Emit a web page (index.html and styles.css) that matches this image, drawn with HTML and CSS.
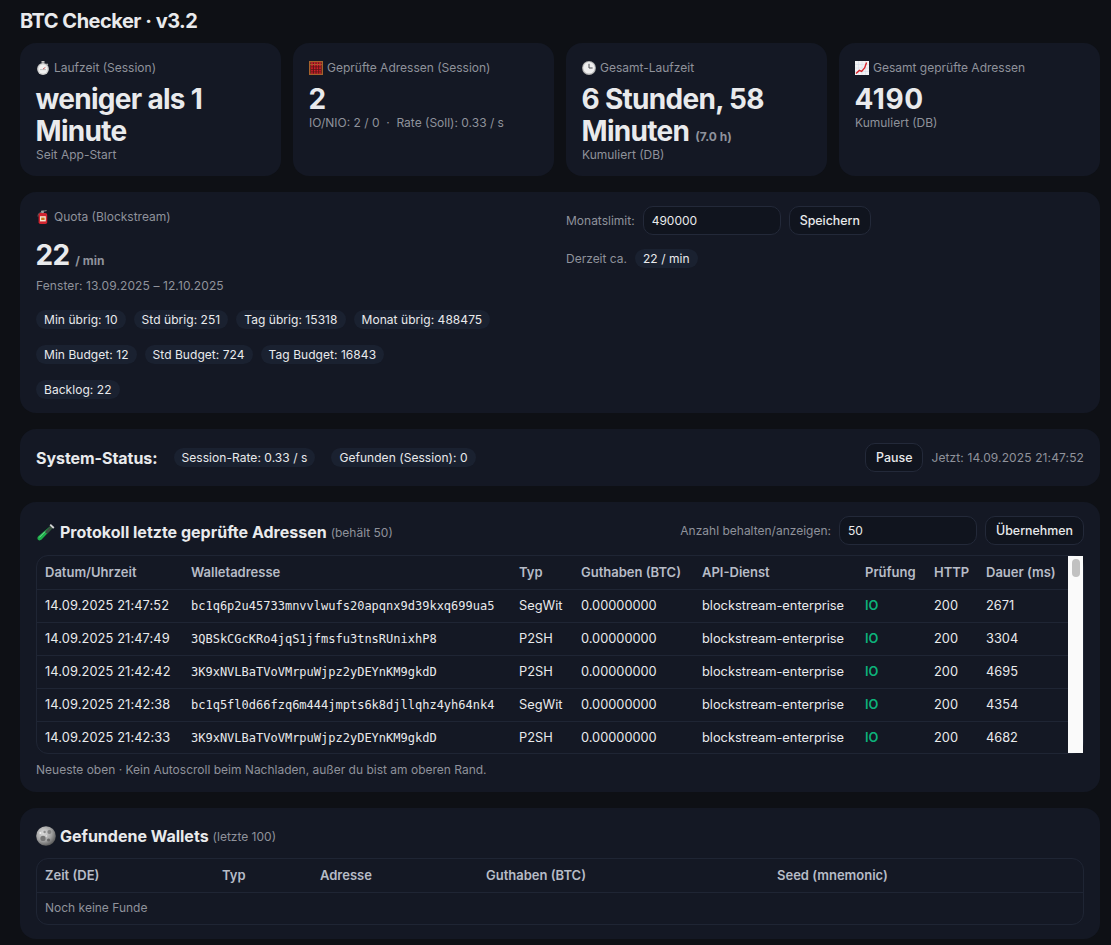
FILE: index.html
```html
<!DOCTYPE html>
<html lang="de">
<head>
  <meta charset="UTF-8" />
  <meta name="viewport" content="width=device-width, initial-scale=1" />
  <title>BTC Checker · v3.2</title>
  <link rel="stylesheet" href="styles.css">
</head>
<body>

  <h1 class="page-title">BTC Checker · v3.2</h1>

  <!-- KPI cards -->
  <div class="kpi-grid">
    <div class="card kpi">
      <div class="label">
        <svg class="emoji" viewBox="0 0 14 14"><rect x="5.5" y="0" width="3" height="1.8" fill="#c4c4c4"/><rect x="6.4" y="1.6" width="1.2" height="1.6" fill="#8f8f8f"/><rect x="10.4" y="2.4" width="1.8" height="1.3" transform="rotate(40 11 3)" fill="#a9a9a9"/><circle cx="7" cy="8" r="5.9" fill="#cfcfcf"/><circle cx="7" cy="8" r="4.5" fill="#f1f1f1"/><path d="M7 8 9.4 6.4" stroke="#c23a3a" stroke-width=".8"/><path d="M4 8.6h6" stroke="#9a9a9a" stroke-width=".6"/></svg>
        Laufzeit (Session)
      </div>
      <div class="value">weniger als 1 Minute</div>
      <div class="sub">Seit App-Start</div>
    </div>
    <div class="card kpi">
      <div class="label">
        <svg class="emoji" viewBox="0 0 14 14"><rect x="0" y="0" width="14" height="14" fill="#a5622c"/><rect x="1.3" y="1.3" width="11.4" height="11.4" fill="#5c1416"/><path d="M1.3 3.6h11.4" stroke="#c08038" stroke-width=".8"/><path d="M3 1.3v11.4M5.7 1.3v11.4M8.4 1.3v11.4M11 1.3v11.4" stroke="#d4202c" stroke-width="1.6" stroke-dasharray="1.8 .7"/></svg>
        Geprüfte Adressen (Session)
      </div>
      <div class="value">2</div>
      <div class="sub">IO/NIO: 2 / 0 &nbsp;·&nbsp; Rate (Soll): 0.33 / s</div>
    </div>
    <div class="card kpi">
      <div class="label">
        <svg class="emoji" viewBox="0 0 14 14"><circle cx="7" cy="7" r="6.9" fill="#b5b5b5"/><circle cx="7" cy="6.8" r="5.8" fill="#efefef"/><path d="M7 2.8V7h3.6" fill="none" stroke="#4a4a50" stroke-width="1"/></svg>
        Gesamt-Laufzeit
      </div>
      <div class="value">6 Stunden, 58 Minuten <span class="value-note">(7.0 h)</span></div>
      <div class="sub">Kumuliert (DB)</div>
    </div>
    <div class="card kpi">
      <div class="label">
        <svg class="emoji" viewBox="0 0 14 14"><rect x="0" y="0" width="14" height="14" fill="#f2f2f4"/><path d="M0 3.5h14M0 7h14M0 10.5h14M3.5 0v14M7 0v14M10.5 0v14" stroke="#c9d3e6" stroke-width=".4"/><path d="M1 12.6 4.4 9.4 6.6 10.4 9.6 7 11.6 1.6" fill="none" stroke="#d8232a" stroke-width="1.4"/></svg>
        Gesamt geprüfte Adressen
      </div>
      <div class="value num">4190</div>
      <div class="sub">Kumuliert (DB)</div>
    </div>
  </div>

  <!-- Quota -->
  <div class="card quota">
    <div class="quota-left">
      <div class="label">
        <svg class="emoji" viewBox="0 0 14 14"><path d="M5 1.6 10.6.6" stroke="#8e8e8e" stroke-width="1" fill="none"/><path d="M5 2.2C2.6 3 2 4.6 2 6.6" stroke="#666" stroke-width=".9" fill="none"/><rect x="5.2" y=".6" width="2.6" height="2.4" fill="#a0a0a0"/><rect x="2.6" y="3" width="8.6" height="11" rx="1.8" fill="#d1242f"/><rect x="4" y="6.2" width="5.8" height="5.2" fill="#f3e6d2"/><rect x="5.2" y="7.6" width="3.4" height="2.4" fill="#c8761e"/></svg>
        Quota (Blockstream)
      </div>
      <div class="quota-value">22 <span class="value-unit">/ min</span></div>
      <div class="sub quota-window">Fenster: 13.09.2025 – 12.10.2025</div>
      <div class="pill-rows">
        <div class="pill-row">
          <span class="pill">Min übrig: 10</span>
          <span class="pill">Std übrig: 251</span>
          <span class="pill">Tag übrig: 15318</span>
          <span class="pill">Monat übrig: 488475</span>
        </div>
        <div class="pill-row">
          <span class="pill">Min Budget: 12</span>
          <span class="pill">Std Budget: 724</span>
          <span class="pill">Tag Budget: 16843</span>
        </div>
        <div class="pill-row">
          <span class="pill">Backlog: 22</span>
        </div>
      </div>
    </div>
    <div class="quota-right">
      <div class="form-row">
        <label class="muted" for="limit">Monatslimit:</label>
        <input id="limit" class="field" type="text" value="490000">
        <button class="btn">Speichern</button>
      </div>
      <div class="rate-row">
        <span class="muted">Derzeit ca.</span>
        <span class="pill">22 / min</span>
      </div>
    </div>
  </div>

  <!-- System status -->
  <div class="card status">
    <div class="status-title">System-Status:</div>
    <span class="pill">Session-Rate: 0.33 / s</span>
    <span class="pill">Gefunden (Session): 0</span>
    <div class="status-right">
      <button class="btn">Pause</button>
      <span class="muted now">Jetzt: 14.09.2025 21:47:52</span>
    </div>
  </div>

  <!-- Log -->
  <div class="card log">
    <div class="section-head">
      <h2 class="section-title log-title">
        <svg class="emoji-lg" viewBox="0 0 20 20"><path d="M15 3.4 17 5.4 5.6 17.6C4.6 18.6 2.9 18.7 2 17.8S1.3 15.2 2.3 14.2Z" fill="#1fae4b"/><path d="M15 3.4 17 5.4 11 11.8 8.8 10Z" fill="#3c4a40"/><path d="M14.2 2.6 17.8 6" stroke="#d5d5d5" stroke-width="1.8"/><path d="M3.4 15.4 9 9.6" stroke="#7fe39a" stroke-width=".9"/></svg>
        Protokoll letzte geprüfte Adressen <small>(behält 50)</small>
      </h2>
      <div class="form-row">
        <label class="muted" for="keep">Anzahl behalten/anzeigen:</label>
        <input id="keep" class="field" type="text" value="50">
        <button class="btn">Übernehmen</button>
      </div>
    </div>
    <div class="table-wrap log-scroll">
      <div class="log-rows">
        <table class="data">
          <colgroup>
            <col class="c-date"><col class="c-addr"><col class="c-type"><col class="c-bal"><col class="c-api"><col class="c-check"><col class="c-http"><col class="c-dur">
          </colgroup>
          <thead>
            <tr><th>Datum/Uhrzeit</th><th>Walletadresse</th><th>Typ</th><th>Guthaben (BTC)</th><th>API-Dienst</th><th>Prüfung</th><th>HTTP</th><th>Dauer (ms)</th></tr>
          </thead>
          <tbody>
            <tr><td class="date">14.09.2025 21:47:52</td><td class="mono">bc1q6p2u45733mnvvlwufs20apqnx9d39kxq699ua5</td><td>SegWit</td><td>0.00000000</td><td>blockstream-enterprise</td><td class="ok">IO</td><td>200</td><td>2671</td></tr>
            <tr><td class="date">14.09.2025 21:47:49</td><td class="mono">3QBSkCGcKRo4jqS1jfmsfu3tnsRUnixhP8</td><td>P2SH</td><td>0.00000000</td><td>blockstream-enterprise</td><td class="ok">IO</td><td>200</td><td>3304</td></tr>
            <tr><td class="date">14.09.2025 21:42:42</td><td class="mono">3K9xNVLBaTVoVMrpuWjpz2yDEYnKM9gkdD</td><td>P2SH</td><td>0.00000000</td><td>blockstream-enterprise</td><td class="ok">IO</td><td>200</td><td>4695</td></tr>
            <tr><td class="date">14.09.2025 21:42:38</td><td class="mono">bc1q5fl0d66fzq6m444jmpts6k8djllqhz4yh64nk4</td><td>SegWit</td><td>0.00000000</td><td>blockstream-enterprise</td><td class="ok">IO</td><td>200</td><td>4354</td></tr>
            <tr><td class="date">14.09.2025 21:42:33</td><td class="mono">3K9xNVLBaTVoVMrpuWjpz2yDEYnKM9gkdD</td><td>P2SH</td><td>0.00000000</td><td>blockstream-enterprise</td><td class="ok">IO</td><td>200</td><td>4682</td></tr>
          </tbody>
        </table>
      </div>
      <div class="scrollbar"><div class="scrollbar-thumb"></div></div>
    </div>
    <div class="sub log-note">Neueste oben · Kein Autoscroll beim Nachladen, außer du bist am oberen Rand.</div>
  </div>

  <!-- Found wallets -->
  <div class="card found">
    <h2 class="section-title found-title">
      <svg class="emoji-lg" viewBox="0 0 20 20"><defs><radialGradient id="moon" cx="38%" cy="35%" r="70%"><stop offset="0" stop-color="#dedede"/><stop offset=".6" stop-color="#a0a0a0"/><stop offset="1" stop-color="#555"/></radialGradient></defs><circle cx="10" cy="10" r="9.8" fill="url(#moon)"/><circle cx="7" cy="12.4" r="2.6" fill="#767676"/><circle cx="13.4" cy="6" r="2" fill="#828282"/><circle cx="12.6" cy="14" r="1.6" fill="#666"/><circle cx="8.6" cy="6" r="1.2" fill="#8e8e8e"/><circle cx="4.4" cy="7" r="1" fill="#efefef"/><circle cx="10.4" cy="10" r=".7" fill="#e6e6e6"/></svg>
      Gefundene Wallets <small>(letzte 100)</small>
    </h2>
    <div class="table-wrap">
      <table class="data">
        <colgroup>
          <col class="f-time"><col class="f-type"><col class="f-addr"><col class="f-bal"><col class="f-seed">
        </colgroup>
        <thead>
          <tr><th>Zeit (DE)</th><th>Typ</th><th>Adresse</th><th>Guthaben (BTC)</th><th>Seed (mnemonic)</th></tr>
        </thead>
        <tbody>
          <tr><td class="empty" colspan="5">Noch keine Funde</td></tr>
        </tbody>
      </table>
    </div>
  </div>

</body>
</html>
```

FILE: styles.css
```css
html, body {
  margin: 0;
  padding: 0;
}

body {
  background: #0e1015;
  color: #e9eaec;
  font-family: Inter, 'Liberation Sans', sans-serif;
  font-size: 12px;
  padding: 10px 11px 6px 20px;
}

.page-title {
  margin: 0 0 11px;
  font-size: 20px;
  font-weight: 700;
  line-height: 22px;
  letter-spacing: -0.5px;
}

.card {
  background: #141824;
  border-radius: 16px;
  box-sizing: border-box;
  padding: 16px;
  margin-bottom: 16px;
}

/* KPI row */
.kpi-grid {
  display: grid;
  grid-template-columns: repeat(4, 1fr);
  gap: 12px;
  margin-bottom: 16px;
}

.kpi {
  margin: 0;
  height: 133px;
}

.label {
  color: #8f929b;
  font-size: 12px;
  line-height: 16px;
  margin-top: 1px;
  display: flex;
  align-items: center;
  gap: 4px;
}

.emoji {
  width: 14px;
  height: 14px;
  flex-shrink: 0;
}

.emoji-lg {
  width: 20px;
  height: 20px;
  flex-shrink: 0;
  margin-right: 4px;
}

.value {
  font-size: 28px;
  font-weight: 700;
  line-height: 32px;
  letter-spacing: -0.7px;
  margin-top: 7px;
  margin-left: -0.5px;
}

.value.num {
  letter-spacing: 0.5px;
}

.value-note {
  font-size: 12px;
  line-height: 1;
  letter-spacing: 0;
  color: #8f929b;
}

.sub {
  color: #8f929b;
  font-size: 12px;
  line-height: 16px;
}

.muted {
  color: #8f929b;
  font-size: 12px;
}

.now {
  letter-spacing: 0.12px;
}

/* Pills */
.pill {
  display: inline-block;
  background: #1a2130;
  border-radius: 999px;
  padding: 0 8px;
  font-size: 12px;
  line-height: 19px;
  letter-spacing: 0.05px;
  white-space: nowrap;
}

/* Quota */
.quota {
  display: grid;
  grid-template-columns: 1fr 1fr;
  column-gap: 12px;
  height: 221px;
}

.quota-value {
  font-size: 28px;
  font-weight: 700;
  line-height: 32px;
  letter-spacing: -0.7px;
  margin-top: 14px;
  margin-left: -0.5px;
}

.value-unit {
  font-size: 12px;
  line-height: 1;
  letter-spacing: 0;
  color: #8f929b;
}

.quota-window {
  margin-top: 7px;
  letter-spacing: 0.1px;
}

.pill-rows {
  display: flex;
  flex-direction: column;
  gap: 16px;
  margin-top: 16px;
}

.pill-row {
  display: flex;
  gap: 8px;
}

.quota-right {
  margin-top: -2px;
}

/* Form controls */
.form-row {
  display: flex;
  align-items: center;
  gap: 8px;
}

.field {
  box-sizing: border-box;
  width: 138px;
  height: 29px;
  background: #10141e;
  border: 1px solid #232939;
  border-radius: 10px;
  color: #e9eaec;
  font: 12px Inter, 'Liberation Sans', sans-serif;
  padding: 0 8px;
}

.btn {
  box-sizing: border-box;
  height: 29px;
  background: #10141e;
  border: 1px solid #232939;
  border-radius: 10px;
  color: #e9eaec;
  font: 500 12.4px Inter, 'Liberation Sans', sans-serif;
  padding: 0 10px;
}

.rate-row {
  display: flex;
  align-items: center;
  gap: 8px;
  margin-top: 14px;
}

/* System status */
.status {
  display: flex;
  align-items: center;
  gap: 16px;
  height: 57px;
  padding: 0 16px;
}

.status-title {
  font-size: 16px;
  font-weight: 700;
  letter-spacing: -0.05px;
}

.status-right {
  margin-left: auto;
  display: flex;
  align-items: center;
  gap: 8px;
}

/* Section headers */
.section-head {
  display: flex;
  align-items: center;
  justify-content: space-between;
  margin-bottom: 10px;
}

.section-title {
  margin: 0;
  display: flex;
  align-items: center;
  font-size: 16px;
  font-weight: 700;
  line-height: 20px;
}

.log-title {
  margin-top: 2px;
}

.section-title small {
  color: #8f929b;
  font-size: 12px;
  font-weight: 400;
  margin-left: 4px;
  margin-top: 2px;
}

.log {
  height: 290px;
  padding-top: 14px;
}

/* Tables */
.table-wrap {
  border: 1px solid #1f2534;
  border-radius: 12px;
  overflow: hidden;
}

.log-scroll {
  display: flex;
  height: 197px;
  overflow: visible;
}

.log-rows {
  flex: 1;
  min-width: 0;
  overflow: hidden;
  border-radius: 12px 0 0 12px;
}

/* white browser scrollbar of the log list */
.scrollbar {
  width: 15px;
  flex-shrink: 0;
  box-sizing: border-box;
  background: #fafafa;
  padding: 3px 3px 0 4px;
}

.scrollbar-thumb {
  height: 18px;
  background: #c1c1c1;
  border-radius: 4px;
}

.data {
  width: 100%;
  border-collapse: collapse;
  table-layout: fixed;
  font-size: 12.8px;
}

.data th, .data td {
  height: 33px;
  box-sizing: border-box;
  padding: 0 8px;
  text-align: left;
  white-space: nowrap;
  border-bottom: 1px solid #1f2534;
}

.data th {
  color: #b7bcc7;
  font-size: 13px;
  font-weight: 600;
}

.date {
  letter-spacing: 0.12px;
}

.mono {
  font-family: 'DejaVu Sans Mono', 'Liberation Mono', monospace;
  font-size: 12px;
}

.ok {
  color: #0db27a;
  font-weight: 600;
}

.c-date { width: 146px; }
.c-addr { width: 328px; }
.c-type { width: 62px; }
.c-bal { width: 121px; }
.c-api { width: 163px; }
.c-check { width: 69px; }
.c-http { width: 52px; }
.c-dur { width: 90px; }

.log-note {
  margin-top: 8px;
}

/* Found wallets */
.found {
  height: 131px;
  margin-bottom: 0;
}

.found-title {
  margin: 1px 0 11px;
}

.f-time { width: 177px; }
.f-type { width: 98px; }
.f-addr { width: 166px; }
.f-bal { width: 291px; }

.data td.empty {
  height: 32px;
  padding-bottom: 2px;
  border-bottom: 0;
  color: #8f929b;
  font-size: 12px;
}
```
